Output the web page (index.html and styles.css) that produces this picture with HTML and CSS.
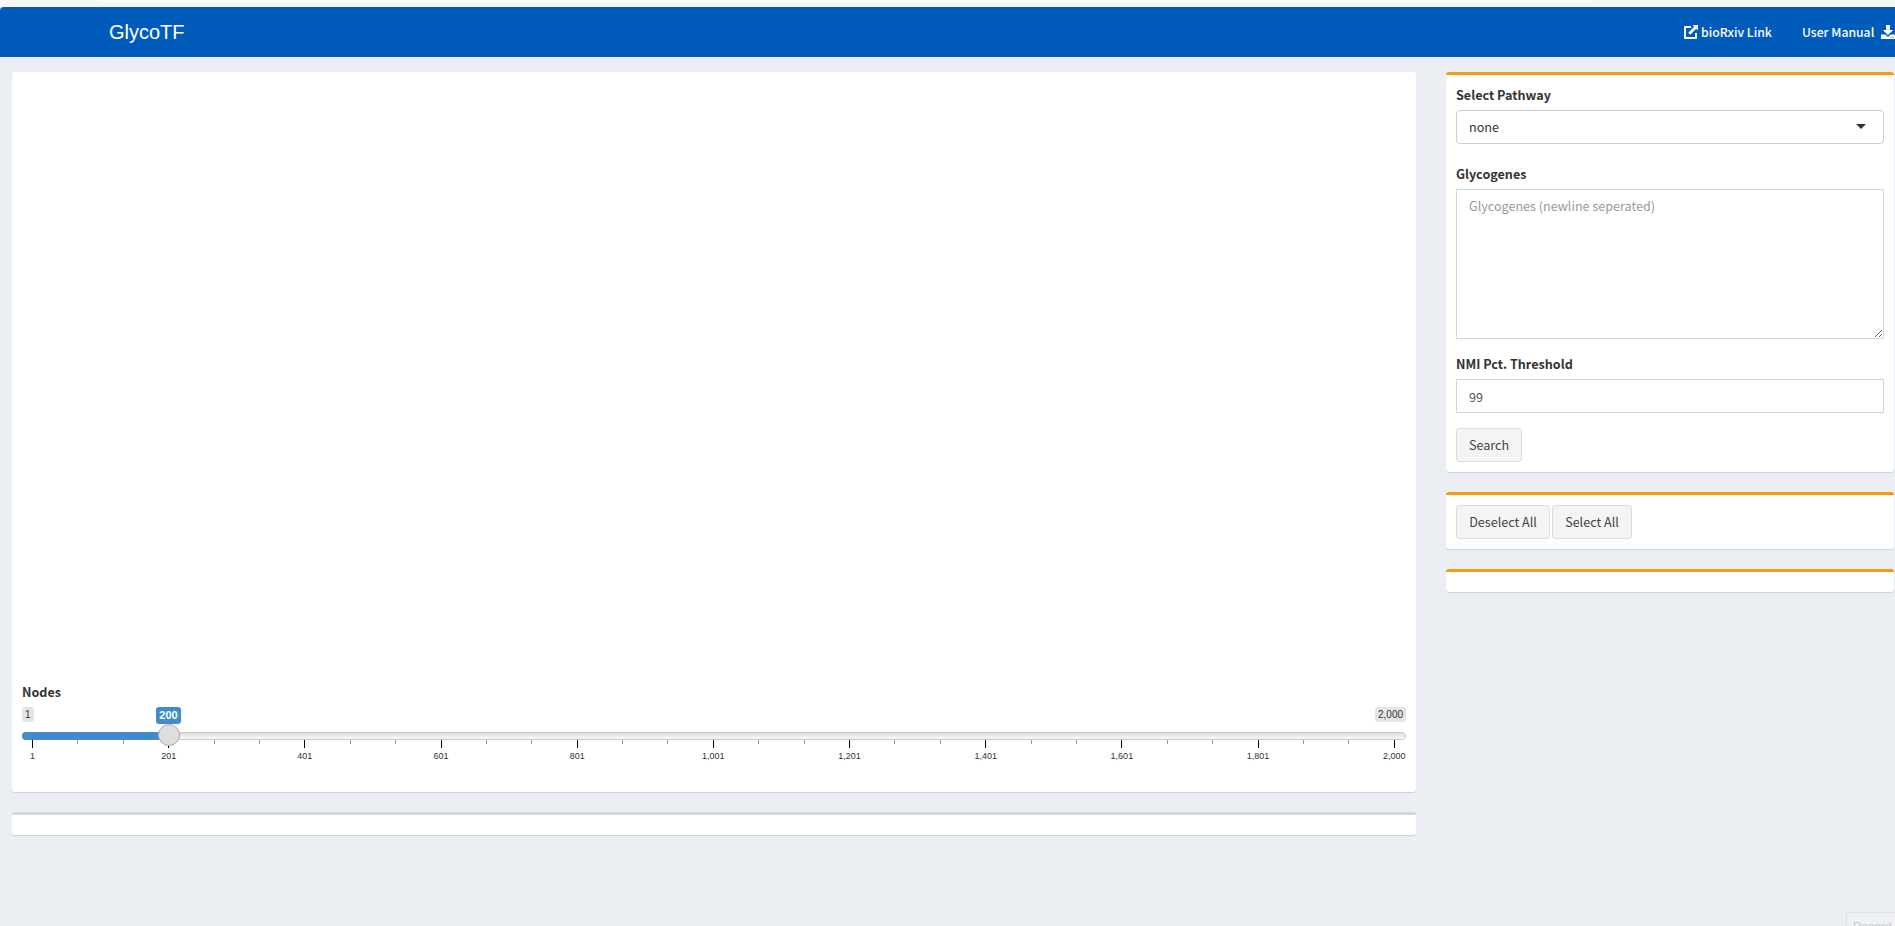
FILE: index.html
```html
<!DOCTYPE html>
<html lang="en">
<head>
<meta charset="utf-8">
<title>GlycoTF</title>
<link rel="stylesheet" href="styles.css">
</head>
<body>
<div class="top-strip"><div class="address-pill"></div></div>
<header class="navbar">
  <div class="brand">GlycoTF</div>
  <nav class="links">
    <a class="link"><svg class="icon" viewBox="0 0 14 14"><path d="M7 2H1v11h11V8" fill="none" stroke="#fff" stroke-width="2" stroke-linejoin="round"/><path d="M8.500 0H14v5.500l-1.800-1.800-6 6-2-2 6-6z" fill="#fff"/></svg><span class="bio">bioRxiv Link</span></a>
    <a class="link"><span class="manual">User Manual</span><svg class="icon" viewBox="0 0 14 14"><path d="M5 0h4v5h3.200L7 10.200 1.800 5H5z" fill="#fff"/><path d="M0 9.500h4.200L7 12l2.800-2.500H14V14H0z" fill="#fff"/><path d="M9.300 12.200h1M11.500 12.200h1" stroke="#005bbb" stroke-width="1"/></svg></a>
  </nav>
</header>
<main class="content">
  <section class="main-col">
    <div class="box graph">
      <div class="canvas"></div>
      <label class="label nodes">Nodes</label>
      <div class="slider">
        <div class="values"><span class="limit">1</span><span class="limit">2,000</span></div>
        <div class="line"><div class="bar"></div></div>
        <div class="ticks" id="ticks"></div>
        <div class="handle"></div>
        <div class="current">200</div>
      </div>
    </div>
    <div class="box grey"></div>
  </section>
  <aside class="side-col">
    <div class="box orange">
      <label class="label">Select Pathway</label>
      <div class="select"><span>none</span><i class="caret"></i></div>
      <label class="label">Glycogenes</label>
      <textarea class="field area" placeholder="Glycogenes (newline seperated)"></textarea>
      <label class="label">NMI Pct. Threshold</label>
      <input class="field number" value="99">
      <button class="btn search">Search</button>
    </div>
    <div class="box orange row">
      <button class="btn deselect">Deselect All</button>
      <button class="btn select-all">Select All</button>
    </div>
    <div class="box orange"></div>
  </aside>
</main>
<div class="record">Record</div>
<script src="ticks.js"></script>
</body>
</html>
```
FILE: ticks.js
```js
const ticks = document.getElementById('ticks');
for (let i = 0; i <= 30; i++) {
  const tick = document.createElement('div');
  tick.className = i % 3 ? 'tick' : 'tick major';
  if (i % 3 === 0) {
    const text = document.createElement('span');
    text.textContent = Math.min(2000, 1 + i / 3 * 200).toLocaleString('en-US');
    tick.appendChild(text);
  }
  ticks.appendChild(tick);
}
```
FILE: styles.css
```css
* { box-sizing: border-box; }
body {
  margin: 0;
  height: 926px;
  overflow: hidden;
  position: relative;
  background: #ebeef3;
  color: #333;
  font: 12.6px/20px "Noto Sans CJK JP", "Noto Sans", sans-serif;
}
.top-strip { height: 7px; background: #f7f7f7; }
.address-pill {
  height: 3px;
  margin: 0 302px 0 97px;
  background: #fff;
  border-radius: 0 0 12px 12px / 0 0 3px 3px;
  box-shadow: 0 1px 0 #efefef;
}
.navbar {
  height: 50px;
  display: flex;
  justify-content: space-between;
  align-items: center;
  background: #005bbb;
  border-top-left-radius: 4px;
  color: #fff;
}
.brand { padding: 0 0 1px 109px; font: 20px/50px "Liberation Sans", Arial, sans-serif; }
.links { display: flex; gap: 30px; }
.link { display: flex; align-items: center; font-size: 12.2px; font-weight: 500; }
.icon { width: 14px; height: 14px; }
.bio { width: 71px; margin-left: 3px; white-space: nowrap; }
.manual { width: 73px; margin-right: 6px; white-space: nowrap; }
.content { display: flex; gap: 30px; padding: 15px 1px 0 12px; }
.main-col { width: 1404px; }
.side-col { width: 448px; }
.box {
  margin-bottom: 20px;
  padding: 10px;
  background: #fff;
  border-top: 3px solid #d2d6de;
  border-radius: 3px;
  box-shadow: 0 1px 1px rgba(0, 0, 0, .12);
}
.orange { border-top-color: #f39c12; }
.graph { height: 720px; border-top: 0; }
.canvas { height: 600px; }
.label { display: block; height: 20px; margin-bottom: 5px; font-weight: 700; }
.slider { position: relative; height: 75px; font-family: "Liberation Sans", Arial, sans-serif; }
.values { display: flex; justify-content: space-between; height: 25px; }
.limit {
  height: 15px;
  padding: 0 3px;
  border-radius: 3px;
  background: #e4e4e4;
  font-size: 10px;
  line-height: 15px;
}
.limit:first-child { width: 12px; }
.limit:last-child { width: 31px; text-align: center; }
.line {
  height: 8px;
  border: 1px solid #ccc;
  border-radius: 8px;
  background: linear-gradient(#dedede, #f8f8f8);
}
.bar { width: 147px; height: 8px; margin: -1px; border-radius: 8px 0 0 8px; background: #428bca; }
.ticks { display: flex; justify-content: space-between; margin: 0 11px 0 10px; }
.tick { display: flex; justify-content: center; width: 1px; height: 4px; background: #999; }
.major { height: 8px; background: #000; }
.major span { margin-top: 9px; font-size: 9px; line-height: 14px; white-space: nowrap; }
.handle {
  position: absolute;
  left: 136px;
  top: 17px;
  width: 22px;
  height: 22px;
  border: 1px solid #aba9b3;
  border-radius: 50%;
  background: #dedede;
}
.current {
  position: absolute;
  left: 134px;
  top: 0;
  width: 25px;
  height: 17px;
  border-radius: 3px;
  background: #428bca;
  color: #fff;
  font-size: 11px;
  font-weight: 700;
  line-height: 17px;
  text-align: center;
}
.select {
  display: flex;
  justify-content: space-between;
  align-items: center;
  height: 34px;
  margin-bottom: 20px;
  padding: 0 17px 0 12px;
  border: 1px solid #ccc;
  border-radius: 4px;
}
.caret { border: 5px solid transparent; border-top-color: #333; border-bottom: 0; margin-bottom: 2px; }
.field {
  display: block;
  width: 100%;
  height: 34px;
  margin: 0 0 15px;
  padding: 6px 12px;
  border: 1px solid #d2d6de;
  outline: 0;
  background: #fff;
  color: #555;
  font: inherit;
}
.area { height: 150px; resize: vertical; }
.field::placeholder { color: #999; }
.btn {
  display: block;
  height: 34px;
  padding: 0;
  border: 1px solid #ddd;
  border-radius: 3px;
  background: #f4f4f4;
  color: #444;
  font: inherit;
  white-space: nowrap;
}
.search { width: 66px; }
.row { display: flex; gap: 2px; }
.deselect { width: 94px; }
.select-all { width: 80px; }
.record {
  position: absolute;
  left: 1846px;
  top: 912px;
  width: 49px;
  height: 34px;
  padding: 4px 0 0 6px;
  border: 1px solid #dfe2e5;
  border-right: 0;
  background: #eff1f4;
  color: #c8cbd0;
  font: 12px/20px "Liberation Sans", Arial, sans-serif;
}
```
